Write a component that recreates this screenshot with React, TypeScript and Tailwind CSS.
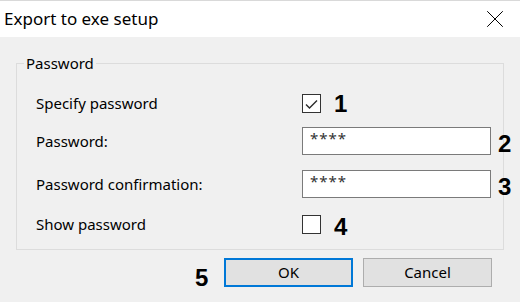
import { X } from 'lucide-react'

const ui = { fontFamily: '"Segoe UI", "Noto Sans", sans-serif' }
const mark = { fontFamily: '"Liberation Sans", Arial, sans-serif' }

function Mark({ n, className }: { n: string; className: string }) {
  // annotation digits drawn over the dialog
  return (
    <span style={mark} className={`absolute text-[24px] font-bold leading-none text-black ${className}`}>
      {n}
    </span>
  )
}

function Box({ checked }: { checked?: boolean }) {
  return (
    <div className="h-[19px] w-[19px] border border-[#333] bg-white">
      {checked && (
        <svg width="17" height="17" viewBox="0 0 17 17" fill="none">
          <path d="M3 9.5 L6.5 13 L14 5.5" stroke="#2b2b2b" strokeWidth="1.4" />
        </svg>
      )}
    </div>
  )
}

function Field() {
  return (
    <div className="h-[28px] w-[189px] border border-[#7a7a7a] bg-white px-[7px] pt-0 text-[15px] leading-5 tracking-[1px] text-[#333]">
      ****
    </div>
  )
}

export default function App() {
  return (
    <div style={ui} className="flex h-[302px] w-[520px] flex-col overflow-hidden bg-[#f0f0f0] text-[15px] text-black">
      <div className="flex h-[37px] shrink-0 items-center justify-between border-t border-[#d9d9d9] bg-white pl-[4px] pr-[10px]">
        <span className="text-[17px]">Export to exe setup</span>
        <X size={30} strokeWidth={0.8} className="text-black" />
      </div>

      <fieldset className="mx-[16px] mt-[16px] border border-[#dcdcdc] px-[7px] pb-[15px]">
        <legend className="px-[2px] leading-5">Password</legend>
        <div className="mt-[21px] flex flex-col pl-[12px]">
          <div className="flex h-[19px] items-center">
            <span className="w-[266px]">Specify password</span>
            <div className="relative">
              <Box checked />
              <Mark n="1" className="left-[32px] top-[-2px]" />
            </div>
          </div>
          <div className="mt-[14px] flex h-[28px] items-center">
            <span className="w-[266px]">Password:</span>
            <div className="relative">
              <Field />
              <Mark n="2" className="left-[196px] top-[5px]" />
            </div>
          </div>
          <div className="mt-[15px] flex h-[28px] items-center">
            <span className="w-[266px]">Password confirmation:</span>
            <div className="relative">
              <Field />
              <Mark n="3" className="left-[196px] top-[5px]" />
            </div>
          </div>
          <div className="mt-[17px] flex h-[19px] items-center">
            <span className="w-[266px]">Show password</span>
            <div className="relative">
              <Box />
              <Mark n="4" className="left-[32px] top-[0px]" />
            </div>
          </div>
        </div>
      </fieldset>

      <div className="mt-[8px] flex items-center justify-end gap-[10px] pr-[28px]">
        <div className="relative">
          <Mark n="5" className="left-[-29px] top-[8px]" />
          <button className="h-[29px] w-[129px] border-2 border-[#0078d7] bg-[#e1e1e1]">OK</button>
        </div>
        <button className="h-[29px] w-[129px] border border-[#adadad] bg-[#e1e1e1]">Cancel</button>
      </div>
    </div>
  )
}
